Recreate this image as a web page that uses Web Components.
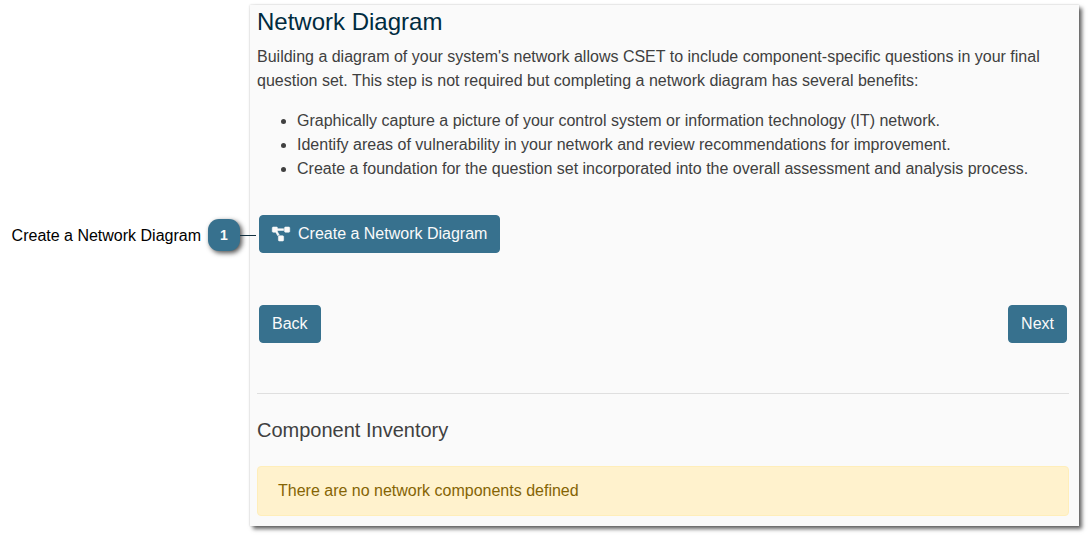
<!DOCTYPE html>
<html lang="en">
<head>
<meta charset="utf-8">
<title>Network Diagram</title>
<style>
body { margin: 0; background: #fff; color: #404040; font: 16px/24px "Liberation Sans", Arial, sans-serif; }
</style>
</head>
<body>
<help-page>
  <call-out slot="callouts" number="1">Create a Network Diagram</call-out>
  <content-panel>
    <network-intro></network-intro>
    <component-inventory></component-inventory>
  </content-panel>
</help-page>

<script>
function define(name, html) {
  const template = document.createElement('template');
  template.innerHTML = html;
  customElements.define(name, class extends HTMLElement {
    constructor() {
      super();
      this.attachShadow({ mode: 'open' }).append(template.content.cloneNode(true));
    }
    connectedCallback() {
      const number = this.shadowRoot.querySelector('.number');
      if (number) number.textContent = this.getAttribute('number');
    }
  });
}

define('help-page', `
  <style>
    :host { display: grid; grid-template-columns: 250px minmax(0, 1fr); padding: 5px 9px 9px 0; }
    aside { padding-top: 214px; }
  </style>
  <aside><slot name="callouts"></slot></aside>
  <main><slot></slot></main>
`);

define('call-out', `
  <style>
    :host { display: flex; align-items: center; justify-content: flex-end; gap: 7px; padding-right: 10px; color: #000; }
    .label { line-height: 32px; padding-top: 1px; margin-bottom: -1px; }
    .number { box-sizing: border-box; width: 32px; height: 32px; border-radius: 11px;
      background: #37718e; color: #fafafa; font-size: 14px; font-weight: bold; line-height: 32px; text-align: center;
      box-shadow: 2px 2px 5px rgba(0, 0, 0, .7); }
    .badge { position: relative; }
    .badge::after { content: ""; position: absolute; left: 100%; top: 16px; width: 16px; height: 1px; background: #12303f; }
  </style>
  <span class="label"><slot></slot></span>
  <div class="badge"><div class="number"></div></div>
`);

define('content-panel', `
  <style>
    :host { display: block; padding: 0 10px 10px 7px; background: #fafafa;
      box-shadow: 3px 3px 4px rgba(0, 0, 0, .6), 0 0 2px rgba(0, 0, 0, .2); }
  </style>
  <slot></slot>
`);

define('action-button', `
  <style>
    :host { display: inline-block; }
    button { display: flex; align-items: center; gap: 8px; margin: 0; padding: 6px 12px; border: 1px solid #37718e;
      border-radius: 4px; background: #37718e; color: #fafafa; font: inherit; cursor: pointer; }
  </style>
  <button type="button"><slot name="icon"></slot><slot></slot></button>
`);

define('network-intro', `
  <style>
    :host { display: block; }
    h1 { margin: 0; padding: 2px 0 8px; color: #002b40; font-size: 24px; font-weight: normal; line-height: 30px; }
    p { margin: 0 0 16px; }
    ul { margin: 0 0 34px; padding-left: 40px; }
    .row { display: flex; justify-content: space-between; padding: 0 2px; margin-bottom: 52px; }
    .row:last-child { margin-bottom: 50px; }
    svg { display: block; width: 18px; height: 14px; overflow: visible; fill: #fafafa; stroke: #fafafa; stroke-width: 20; }
  </style>
  <h1>Network Diagram</h1>
  <p>Building a diagram of your system's network allows CSET to include component-specific questions in your final question set. This step is not required but completing a network diagram has several benefits:</p>
  <ul>
    <li>Graphically capture a picture of your control system or information technology (IT) network.</li>
    <li>Identify areas of vulnerability in your network and review recommendations for improvement.</li>
    <li>Create a foundation for the question set incorporated into the overall assessment and analysis process.</li>
  </ul>
  <div class="row">
    <action-button>
      <svg slot="icon" viewBox="0 0 640 512" aria-hidden="true"><path d="M384 320H256c-17.67 0-32 14.33-32 32v128c0 17.67 14.33 32 32 32h128c17.67 0 32-14.33 32-32V352c0-17.67-14.33-32-32-32zM192 32c0-17.67-14.33-32-32-32H32C14.33 0 0 14.33 0 32v128c0 17.67 14.33 32 32 32h95.72l73.16 128.04C211.98 300.98 232.4 288 256 288h.28L192 175.51V128h224V64H192V32zM608 0H480c-17.67 0-32 14.33-32 32v128c0 17.67 14.33 32 32 32h128c17.67 0 32-14.33 32-32V32c0-17.67-14.33-32-32-32z"/></svg>
      Create a Network Diagram
    </action-button>
  </div>
  <div class="row">
    <action-button>Back</action-button>
    <action-button>Next</action-button>
  </div>
`);

define('component-inventory', `
  <style>
    :host { display: block; border-top: 1px solid #dfdfdf; padding-top: 24px; }
    h2 { margin: 0 0 24px; font-size: 20px; font-weight: normal; line-height: 24px; }
    .alert { padding: 12px 20px; border: 1px solid #ffeeba; border-radius: 4px; background: #fff2cd; color: #856404; }
  </style>
  <h2>Component Inventory</h2>
  <div class="alert" role="status">There are no network components defined</div>
`);
</script>
</body>
</html>
